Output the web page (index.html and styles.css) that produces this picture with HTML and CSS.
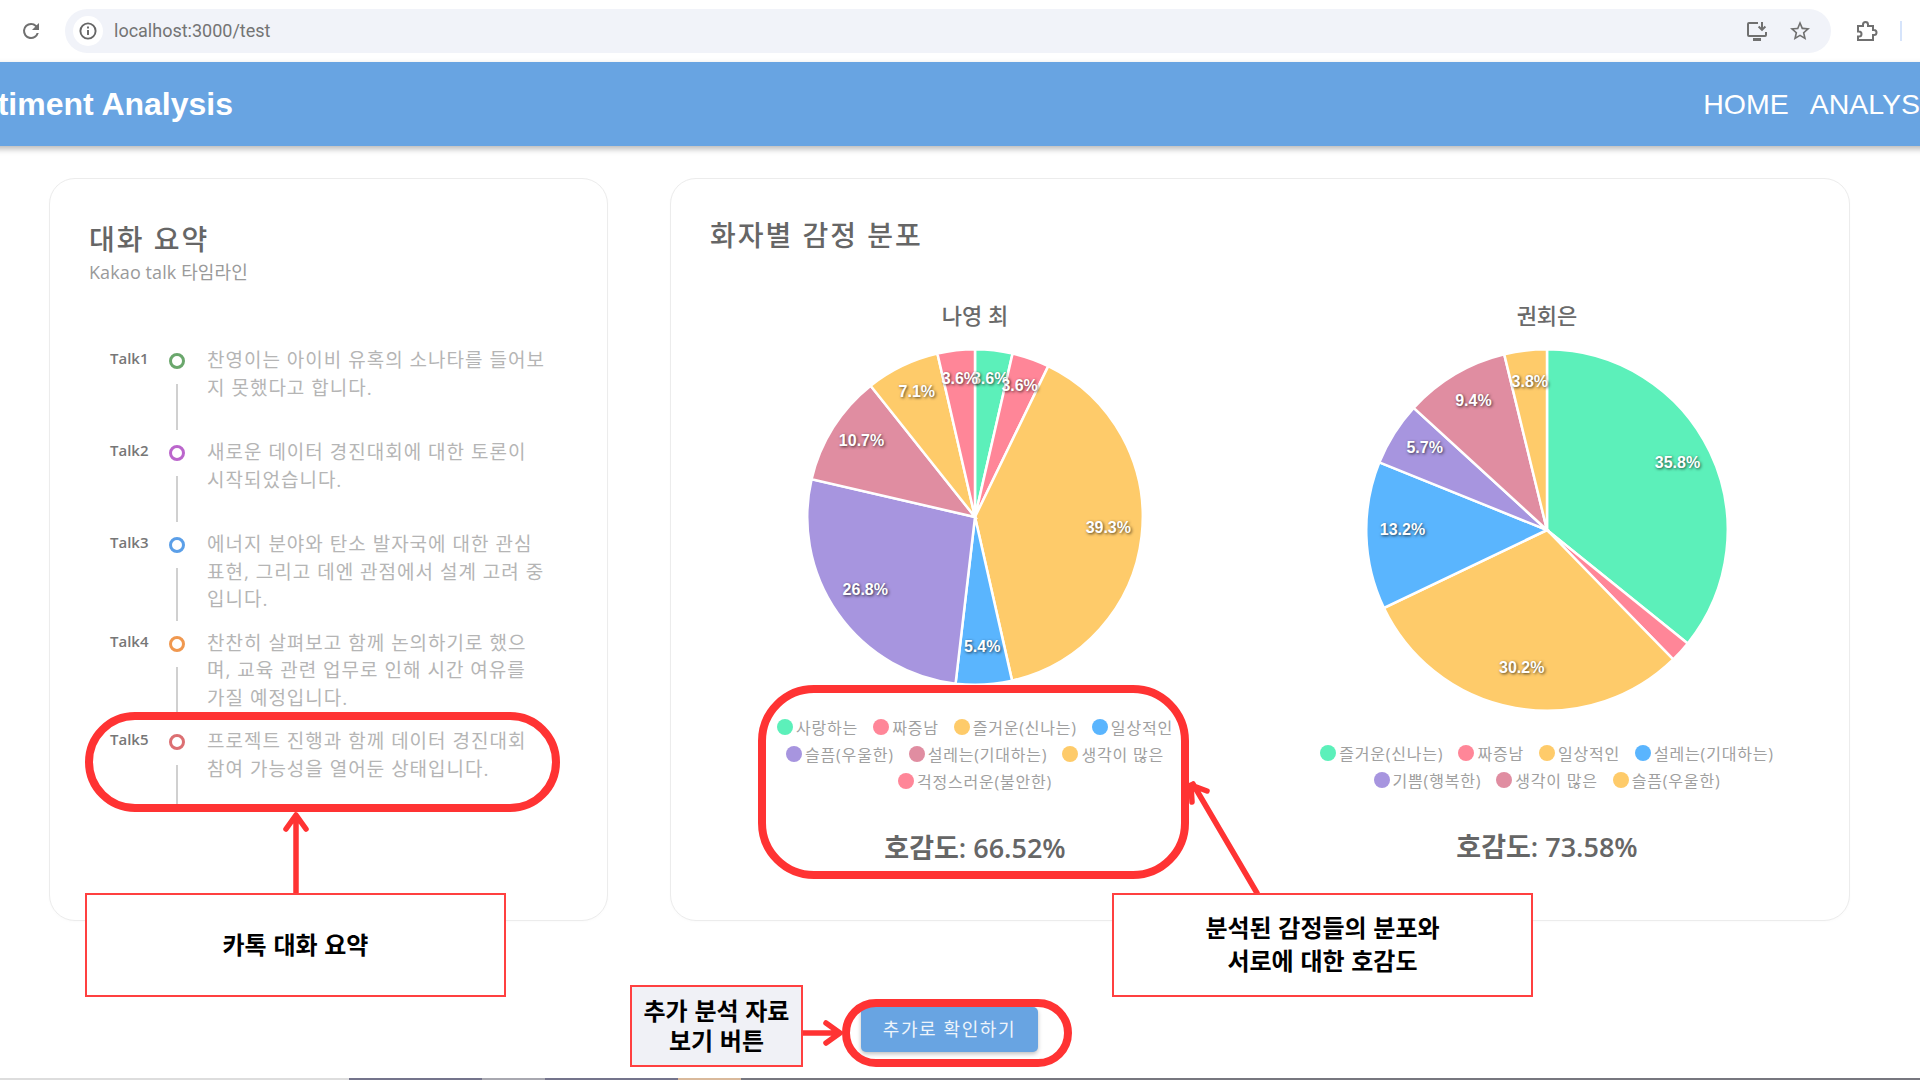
FILE: index.html
```html
<!DOCTYPE html>
<html lang="ko">
<head>
  <meta charset="UTF-8" />
  <meta name="viewport" content="width=device-width, initial-scale=1.0" />
  <title>Sentiment Analysis</title>
  <link rel="stylesheet" href="styles.css">
</head>
<body>
  <div class="toolbar">
    <svg class="tool-icon reload-icon" viewBox="0 0 24 24"><path d="M17.65 6.35A7.96 7.96 0 0 0 12 4a8 8 0 1 0 7.75 10h-2.08A6 6 0 1 1 12 6c1.66 0 3.14.69 4.22 1.78L13 11h7V4l-2.35 2.35z"/></svg>
    <div class="address-bar">
      <span class="info-badge">
        <svg class="info-icon" viewBox="0 0 20 20"><circle cx="10" cy="10" r="7.6"/><path d="M10 9v5M10 5.6v1.8"/></svg>
      </span>
      <span class="url">localhost:3000/test</span>
      <svg class="line-icon install-icon" viewBox="0 0 24 24"><path d="M13 4H4a1 1 0 0 0-1 1v11a1 1 0 0 0 1 1h16a1 1 0 0 0 1-1v-3"/><path d="M8 20.5h8" class="thick"/><path d="M17 3v7.5M13.6 7.5l3.4 3.4 3.4-3.4"/></svg>
      <svg class="tool-icon star-icon" viewBox="0 0 24 24"><path d="M22 9.24l-7.19-.62L12 2 9.19 8.63 2 9.24l5.46 4.73L5.82 21 12 17.27 18.18 21l-1.63-7.03L22 9.24zM12 15.4l-3.76 2.27 1-4.28-3.32-2.88 4.38-.38L12 6.1l1.71 4.04 4.38.38-3.32 2.88 1 4.28L12 15.4z"/></svg>
    </div>
    <svg class="line-icon ext-icon" viewBox="0 0 24 24"><path d="M4 7h5V5.5a2.5 2.5 0 0 1 5 0V7h5v4h1a2.5 2.5 0 0 1 0 5h-1v5H4v-3.5h1a2.5 2.5 0 0 0 0-5H4V7z"/></svg>
    <span class="toolbar-sep"></span>
  </div>

  <header class="app-header">
    <div class="brand">Sentiment Analysis</div>
    <nav class="nav">
      <a href="#">HOME</a>
      <a href="#">ANALYSIS</a>
    </nav>
  </header>

  <main class="content">
    <div class="cards">
      <section class="card summary-card">
        <h2 class="card-title">대화 요약</h2>
        <p class="card-sub">Kakao talk 타임라인</p>
        <ul class="timeline">
          <li class="talk-item">
            <span class="talk-label">Talk1</span>
            <div class="talk-track"><span class="talk-dot dot-green"></span><span class="talk-line"></span></div>
            <p class="talk-text">찬영이는 아이비 유혹의 소나타를 들어보지 못했다고 합니다.</p>
          </li>
          <li class="talk-item">
            <span class="talk-label">Talk2</span>
            <div class="talk-track"><span class="talk-dot dot-purple"></span><span class="talk-line"></span></div>
            <p class="talk-text">새로운 데이터 경진대회에 대한 토론이 시작되었습니다.</p>
          </li>
          <li class="talk-item">
            <span class="talk-label">Talk3</span>
            <div class="talk-track"><span class="talk-dot dot-blue"></span><span class="talk-line"></span></div>
            <p class="talk-text">에너지 분야와 탄소 발자국에 대한 관심 표현, 그리고 데엔 관점에서 설계 고려 중입니다.</p>
          </li>
          <li class="talk-item">
            <span class="talk-label">Talk4</span>
            <div class="talk-track"><span class="talk-dot dot-orange"></span><span class="talk-line"></span></div>
            <p class="talk-text">찬찬히 살펴보고 함께 논의하기로 했으며, 교육 관련 업무로 인해 시간 여유를 가질 예정입니다.</p>
          </li>
          <li class="talk-item">
            <span class="talk-label">Talk5</span>
            <div class="talk-track"><span class="talk-dot dot-red"></span><span class="talk-line"></span></div>
            <p class="talk-text">프로젝트 진행과 함께 데이터 경진대회 참여 가능성을 열어둔 상태입니다.</p>
          </li>
        </ul>
      </section>

      <section class="card chart-card">
        <h2 class="card-title">화자별 감정 분포</h2>
        <div class="chart-row">
          <div class="chart-col">
            <h3 class="chart-name">나영 최</h3>
            <svg class="pie" id="pieOne" width="336" height="336"></svg>
            <ul class="legend">
              <li><span class="legend-dot mint"></span>사랑하는</li>
              <li><span class="legend-dot pink"></span>짜증남</li>
              <li><span class="legend-dot yellow"></span>즐거운(신나는)</li>
              <li><span class="legend-dot sky"></span>일상적인</li>
              <li><span class="legend-dot violet"></span>슬픔(우울한)</li>
              <li><span class="legend-dot rose"></span>설레는(기대하는)</li>
              <li><span class="legend-dot yellow"></span>생각이 많은</li>
              <li><span class="legend-dot pink"></span>걱정스러운(불안한)</li>
            </ul>
            <p class="score">호감도: 66.52%</p>
          </div>
          <div class="chart-col">
            <h3 class="chart-name">권회은</h3>
            <svg class="pie" id="pieTwo" width="362" height="362"></svg>
            <ul class="legend">
              <li><span class="legend-dot mint"></span>즐거운(신나는)</li>
              <li><span class="legend-dot pink"></span>짜증남</li>
              <li><span class="legend-dot yellow"></span>일상적인</li>
              <li><span class="legend-dot sky"></span>설레는(기대하는)</li>
              <li><span class="legend-dot violet"></span>기쁨(행복한)</li>
              <li><span class="legend-dot rose"></span>생각이 많은</li>
              <li><span class="legend-dot yellow"></span>슬픔(우울한)</li>
            </ul>
            <p class="score">호감도: 73.58%</p>
          </div>
        </div>
      </section>
    </div>

    <div class="more-row">
      <button class="more-btn" type="button">추가로 확인하기</button>
    </div>
  </main>

  <div class="taskbar-edge">
    <span class="edge-a"></span>
    <span class="edge-b"></span>
    <span class="edge-c"></span>
    <span class="edge-b"></span>
    <span class="edge-d"></span>
    <span class="edge-e"></span>
  </div>

  <!-- red callouts drawn on top of the screenshot -->
  <svg class="callout-arrows" viewBox="0 0 1920 1080">
    <path d="M296 893V816M286 829l10-14 10 14"/>
    <path d="M1257 893L1193 784M1207 791l-16-6 1 17"/>
    <path d="M803 1033h35M826 1023l14 10-14 10"/>
  </svg>
  <div class="ring ring-talk"></div>
  <div class="ring ring-legend"></div>
  <div class="ring ring-button"></div>
  <div class="note note-talk">카톡 대화 요약</div>
  <div class="note note-chart">분석된 감정들의 분포와<br>서로에 대한 호감도</div>
  <div class="note note-button">추가 분석 자료<br>보기 버튼</div>

  <script src="charts.js"></script>
</body>
</html>
```

FILE: styles.css
```css
* {
  margin: 0;
  padding: 0;
  box-sizing: border-box;
}

body {
  font-family: "Open Sans", "Noto Sans CJK KR", sans-serif;
  background-color: #ffffff;
  display: flex;
  flex-direction: column;
  width: 1920px;
  height: 1080px;
  overflow: hidden;
  position: relative;
}

ul {
  list-style: none;
}

/* browser toolbar */
.toolbar {
  display: flex;
  align-items: center;
  height: 62px;
  padding-left: 19px;
  background-color: #ffffff;
  flex-shrink: 0;
}

.tool-icon {
  width: 24px;
  height: 24px;
  fill: #707070;
  flex-shrink: 0;
}

.line-icon {
  width: 24px;
  height: 24px;
  fill: none;
  stroke: #707070;
  stroke-width: 2;
  flex-shrink: 0;
}

.line-icon .thick {
  stroke-width: 3;
}

.address-bar {
  display: flex;
  align-items: center;
  width: 1766px;
  height: 44px;
  margin-left: 22px;
  padding: 0 19px 0 8px;
  background-color: #f1f3f9;
  border-radius: 22px;
}

.info-badge {
  display: flex;
  justify-content: center;
  align-items: center;
  width: 30px;
  height: 30px;
  background-color: #ffffff;
  border-radius: 50%;
}

.info-icon {
  width: 20px;
  height: 20px;
  fill: none;
  stroke: #666666;
  stroke-width: 1.9;
}

.url {
  flex: 1;
  margin-left: 11px;
  padding-bottom: 2px;
  font-family: "Roboto", sans-serif;
  font-size: 18px;
  color: #747474;
}

.star-icon {
  margin-left: 19px;
}

.ext-icon {
  margin-left: 23px;
}

.toolbar-sep {
  width: 2px;
  height: 20px;
  margin-left: 22px;
  background-color: #d6e4fb;
}

/* app header, wider than the window */
.app-header {
  display: flex;
  justify-content: space-between;
  align-items: center;
  flex-shrink: 0;
  width: 2008px;
  height: 84px;
  margin-left: -61px;
  background-color: #68a4e2;
  box-shadow: 0 3px 6px rgba(0, 0, 0, 0.28);
  color: #ffffff;
  font-family: "Liberation Sans", sans-serif;
}

.brand {
  font-size: 32px;
  font-weight: 700;
}

.nav {
  display: flex;
  gap: 21px;
}

.nav a {
  font-size: 28.5px;
  color: #ffffff;
  text-decoration: none;
}

/* main area */
.content {
  padding: 32px 70px 0 49px;
}

.cards {
  display: flex;
  gap: 62px;
}

.card {
  height: 743px;
  background-color: #ffffff;
  border: 1px solid #ececec;
  border-radius: 26px;
  box-shadow: 0 1px 3px rgba(0, 0, 0, 0.02);
}

.card-title {
  font-size: 28px;
  font-weight: 500;
  line-height: 40px;
  letter-spacing: 2px;
  color: #666666;
}

.card-sub {
  font-size: 18px;
  line-height: 26px;
  letter-spacing: 0.1px;
  color: #9a9a9a;
}

.summary-card {
  width: 559px;
  padding: 40px 40px 0 39px;
}

.timeline {
  margin-top: 60px;
}

.talk-item {
  display: flex;
  min-height: 92px;
  padding-left: 21px;
}

.talk-label {
  width: 59px;
  font-size: 15px;
  font-weight: 600;
  line-height: 27px;
  color: #777777;
}

.talk-track {
  display: flex;
  flex-direction: column;
  align-items: center;
  width: 16px;
  padding: 8px 0 7px;
}

.talk-dot {
  width: 16px;
  height: 16px;
  border: 3px solid #999999;
  border-radius: 50%;
}

.dot-green { border-color: #6aa76c; }
.dot-purple { border-color: #bb66cc; }
.dot-blue { border-color: #5b9fe8; }
.dot-orange { border-color: #f0984f; }
.dot-red { border-color: #dc6f72; }

.talk-line {
  flex: 1;
  width: 2.5px;
  margin-top: 15px;
  background-color: #d0d0d0;
}

.talk-text {
  width: 340px;
  margin-left: 22px;
  padding: 2px 0 14px;
  font-size: 19px;
  line-height: 27.5px;
  letter-spacing: 1px;
  color: #b5b5b5;
}

.chart-card {
  width: 1180px;
  padding: 36px 37px 0 39px;
}

.chart-row {
  display: flex;
  justify-content: space-between;
  margin-top: 45px;
}

.chart-col {
  display: flex;
  flex-direction: column;
  align-items: center;
  width: 530px;
}

.chart-name {
  font-size: 22px;
  font-weight: 500;
  line-height: 30px;
  color: #6a6a6a;
}

.pie {
  display: block;
  margin-top: 19px;
}

.pie-slice {
  stroke: #ffffff;
  stroke-width: 2.5;
}

.pie-label {
  font-family: "Liberation Sans", sans-serif;
  font-size: 16px;
  font-weight: 700;
  fill: #ffffff;
  text-anchor: middle;
  dominant-baseline: central;
  text-shadow: 1px 1px 3px rgba(0, 0, 0, 0.7);
}

.legend {
  display: flex;
  flex-wrap: wrap;
  justify-content: center;
  column-gap: 15px;
  width: 500px;
  margin-top: 29px;
}

.legend li {
  display: flex;
  align-items: center;
  gap: 3px;
  height: 26.7px;
  font-size: 16px;
  letter-spacing: 0.8px;
  color: #a0a0a0;
}

.legend-dot {
  width: 16px;
  height: 16px;
  border-radius: 50%;
}

.mint { background-color: #5cf0ba; }
.pink { background-color: #ff8698; }
.yellow { background-color: #fecb6a; }
.sky { background-color: #5ab5fe; }
.violet { background-color: #a795df; }
.rose { background-color: #e08da1; }

.score {
  margin-top: 37px;
  font-size: 27px;
  font-weight: 600;
  line-height: 34px;
  color: #666666;
}

.more-row {
  display: flex;
  justify-content: center;
  margin-top: 86px;
}

.more-btn {
  width: 177px;
  height: 45px;
  padding-bottom: 4px;
  border: none;
  border-radius: 5px;
  background-color: #68a4e2;
  box-shadow: 0 2px 4px rgba(0, 0, 0, 0.25);
  font-family: inherit;
  font-size: 18px;
  letter-spacing: 1.6px;
  color: #eef4fb;
  cursor: pointer;
}

.taskbar-edge {
  display: flex;
  height: 2px;
  margin-top: auto;
  flex-shrink: 0;
}

.edge-a { width: 349px; background-color: #dddddd; }
.edge-b { width: 133px; background-color: #74748c; }
.edge-c { width: 63px; background-color: #a8a8b0; }
.edge-d { width: 63px; background-color: #d9b99b; }
.edge-e { flex: 1; background-color: #77777f; }

/* callouts */
.callout-arrows {
  position: absolute;
  top: 0;
  left: 0;
  width: 1920px;
  height: 1080px;
  fill: none;
  stroke: #ff3333;
  stroke-width: 5.5;
  stroke-linecap: round;
  stroke-linejoin: round;
}

.ring {
  position: absolute;
  border: 8px solid #ff3333;
}

.ring-talk {
  left: 85px;
  top: 712px;
  width: 475px;
  height: 100px;
  border-radius: 50px;
}

.ring-legend {
  left: 758px;
  top: 685px;
  width: 431px;
  height: 194px;
  border-radius: 56px;
}

.ring-button {
  left: 842px;
  top: 999px;
  width: 230px;
  height: 68px;
  border-radius: 34px;
}

.note {
  position: absolute;
  display: flex;
  justify-content: center;
  align-items: center;
  padding-bottom: 4px;
  border: 2px solid #ff4040;
  background-color: #ffffff;
  font-family: "Noto Sans CJK KR", sans-serif;
  font-size: 24px;
  font-weight: 700;
  line-height: 33px;
  color: #000000;
  text-align: center;
}

.note-talk {
  left: 85px;
  top: 893px;
  width: 421px;
  height: 104px;
}

.note-chart {
  left: 1112px;
  top: 893px;
  width: 421px;
  height: 104px;
}

.note-button {
  left: 630px;
  top: 985px;
  width: 173px;
  height: 82px;
  padding-bottom: 2px;
  line-height: 30px;
  background-color: #f0f1f6;
}
```

FILE: charts.js
```js
// Percent values clockwise from 12 o'clock
const pieOne = [
  { value: 3.6, color: "#5cf0ba" },
  { value: 3.6, color: "#ff8698" },
  { value: 39.3, color: "#fecb6a" },
  { value: 5.4, color: "#5ab5fe" },
  { value: 26.8, color: "#a795df" },
  { value: 10.7, color: "#e08da1" },
  { value: 7.1, color: "#fecb6a" },
  { value: 3.6, color: "#ff8698" },
];

const pieTwo = [
  { value: 35.8, color: "#5cf0ba" },
  { value: 1.9, color: "#ff8698", hideLabel: true },
  { value: 30.2, color: "#fecb6a" },
  { value: 13.2, color: "#5ab5fe" },
  { value: 5.7, color: "#a795df" },
  { value: 9.4, color: "#e08da1" },
  { value: 3.8, color: "#fecb6a" },
];

function point(cx, cy, r, angle) {
  return [cx + r * Math.sin(angle), cy - r * Math.cos(angle)];
}

function svgEl(name, attrs) {
  const el = document.createElementNS("http://www.w3.org/2000/svg", name);
  Object.keys(attrs).forEach((key) => el.setAttribute(key, attrs[key]));
  return el;
}

function drawPie(id, slices) {
  const svg = document.getElementById(id);
  const size = Number(svg.getAttribute("width"));
  const c = size / 2;
  const r = c - 0.25;
  const total = slices.reduce((sum, s) => sum + s.value, 0);
  const labels = [];
  let start = 0;

  slices.forEach((slice) => {
    const sweep = (slice.value / total) * Math.PI * 2;
    const end = start + sweep;
    const [x1, y1] = point(c, c, r, start);
    const [x2, y2] = point(c, c, r, end);
    const large = sweep > Math.PI ? 1 : 0;
    svg.appendChild(svgEl("path", {
      class: "pie-slice",
      fill: slice.color,
      d: `M${c} ${c}L${x1} ${y1}A${r} ${r} 0 ${large} 1 ${x2} ${y2}Z`,
    }));

    if (!slice.hideLabel) {
      const [lx, ly] = point(c, c, r * 0.8, start + sweep / 2);
      const label = svgEl("text", { class: "pie-label", x: lx, y: ly - 5 });
      label.textContent = slice.value.toFixed(1) + "%";
      labels.push(label);
    }
    start = end;
  });

  labels.forEach((label) => svg.appendChild(label));
}

drawPie("pieOne", pieOne);
drawPie("pieTwo", pieTwo);
```
